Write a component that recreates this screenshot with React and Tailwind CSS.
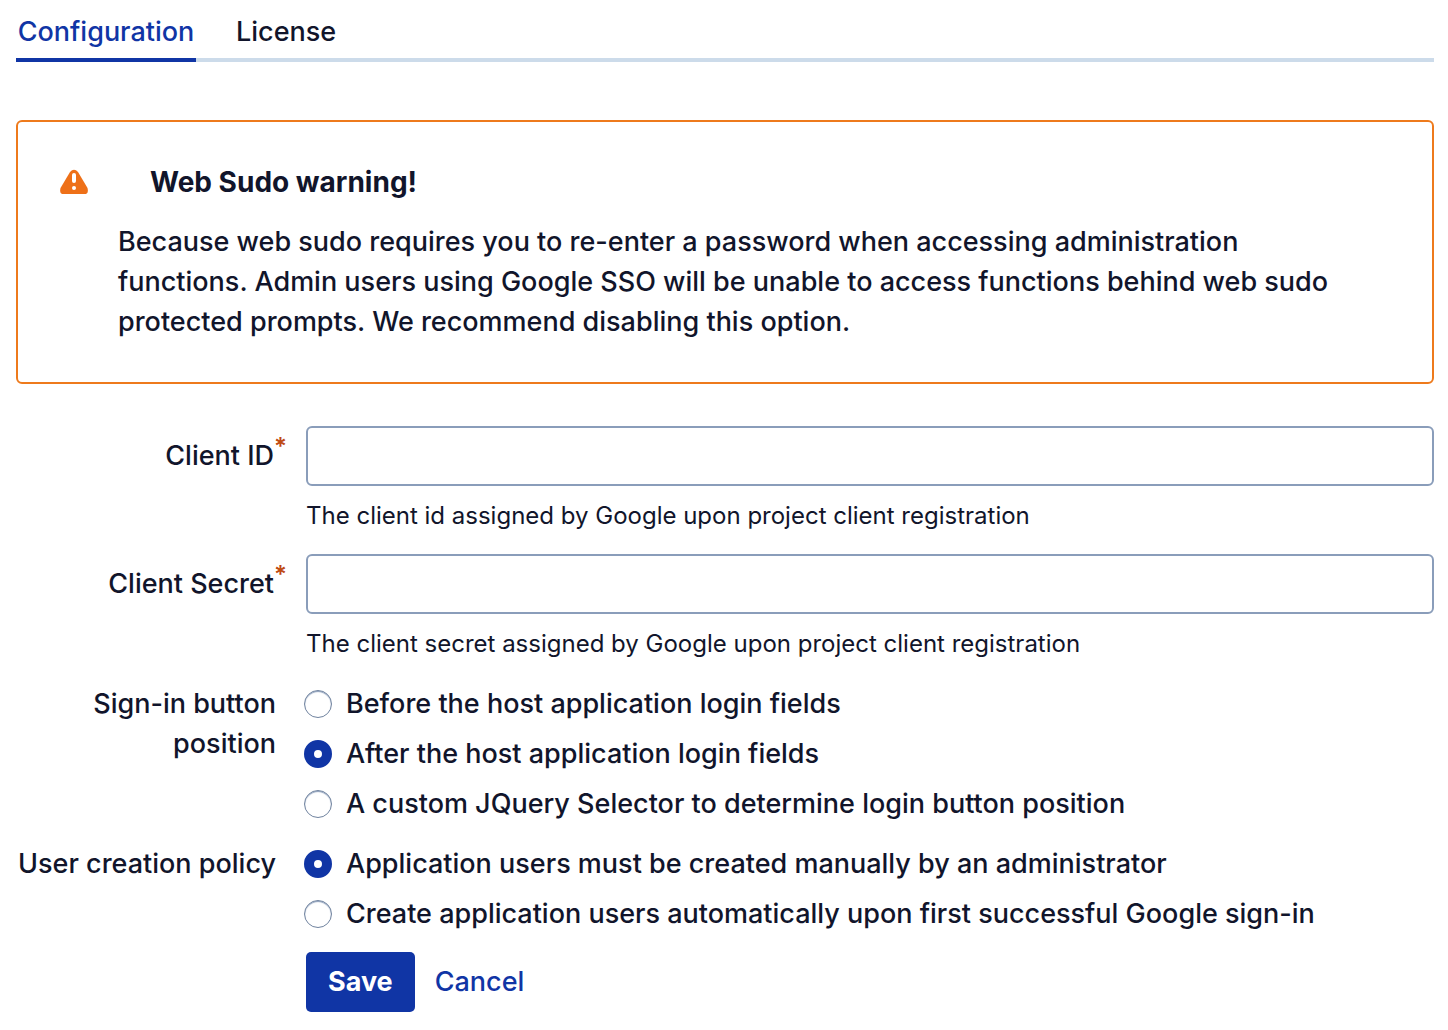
const asterisk = <span className="relative -top-2.5 text-[24px] leading-none font-semibold text-[#bf4a14]">*</span>;

function Field({ id, label, help }) {
  return (
    <div className="flex">
      <label htmlFor={id} className="w-[271px] shrink-0 pt-2.5 text-right leading-10">
        {label}
        {asterisk}
      </label>
      <div className="ml-[19px] min-w-0 flex-1">
        <input id={id} type="text" className="block h-[60px] w-full rounded-[6px] border-2 border-[#8a9dba] bg-white px-3 outline-none" />
        <p className="mt-2.5 text-[24px] leading-10 font-normal">{help}</p>
      </div>
    </div>
  );
}

function Choice({ name, label, checked }) {
  return (
    <label className="flex items-center gap-3.5 leading-10">
      <input
        type="radio"
        name={name}
        defaultChecked={checked}
        className="size-7 shrink-0 appearance-none rounded-full border border-[#70839f] bg-white shadow-[inset_0_1px_1px_#8a9dba] checked:border-[10px] checked:border-[#1035a5] checked:shadow-none"
      />
      {label}
    </label>
  );
}

function Group({ label, children }) {
  return (
    <div role="radiogroup" aria-label={label} className="flex">
      <div className="w-[260px] shrink-0 text-right leading-10">{label}</div>
      <div className="ml-7 flex min-w-0 flex-1 flex-col gap-2.5">{children}</div>
    </div>
  );
}

export default function App() {
  return (
    <main className="min-h-screen bg-white px-4 pr-3.5 font-['Inter',sans-serif] text-[27px] font-medium text-[#11152b]">
      <nav className="flex gap-10 border-b-4 border-[#ccdbea] pt-3 leading-10">
        <a href="#configuration" className="-mb-1 min-w-[180px] border-b-4 border-[#1035a5] pb-1.5 text-center text-[#1035a5]">Configuration</a>
        <a href="#license">License</a>
      </nav>

      <section className="mt-[58px] flex rounded-[6px] border-2 border-[#ee7a1c] pt-10 pr-[58px] pb-10 pl-10">
        <svg viewBox="0 0 30 26" className="mt-1.5 h-[26px] w-[30px] shrink-0">
          <path d="M12 4Q16 -0.500 20 4L29.500 20Q31 26 26.500 26H5.500Q1 26 2.500 20Z" fill="#ee7018" />
          <path d="M16 7v6" stroke="white" strokeWidth="4" strokeLinecap="round" />
          <circle cx="16" cy="20" r="2" fill="white" />
        </svg>
        <div className="ml-[30px]">
          <h2 className="pl-8 text-[28px] leading-10 font-bold">Web Sudo warning!</h2>
          <p className="mt-5 leading-10">
            Because web sudo requires you to re-enter a password when accessing administration functions. Admin users using Google SSO will be unable to access functions behind web sudo protected prompts. We recommend disabling this option.
          </p>
        </div>
      </section>

      <form className="mt-[42px]" onSubmit={(e) => e.preventDefault()}>
        <div className="flex flex-col gap-[18px]">
          <Field id="client-id" label="Client ID" help="The client id assigned by Google upon project client registration" />
          <Field id="client-secret" label="Client Secret" help="The client secret assigned by Google upon project client registration" />
        </div>
        <div className="mt-5 flex flex-col gap-5">
          <Group label="Sign-in button position">
            <Choice name="position" label="Before the host application login fields" />
            <Choice name="position" label="After the host application login fields" checked />
            <Choice name="position" label="A custom JQuery Selector to determine login button position" />
          </Group>
          <Group label="User creation policy">
            <Choice name="policy" label="Application users must be created manually by an administrator" checked />
            <Choice name="policy" label="Create application users automatically upon first successful Google sign-in" />
          </Group>
        </div>
        <div className="mt-[18px] ml-[290px] flex gap-5">
          <button type="submit" className="h-[60px] rounded-[5px] bg-[#1035a5] px-[22px] font-bold text-white">Save</button>
          <button type="button" className="text-[#1035a5]">Cancel</button>
        </div>
      </form>
    </main>
  );
}
